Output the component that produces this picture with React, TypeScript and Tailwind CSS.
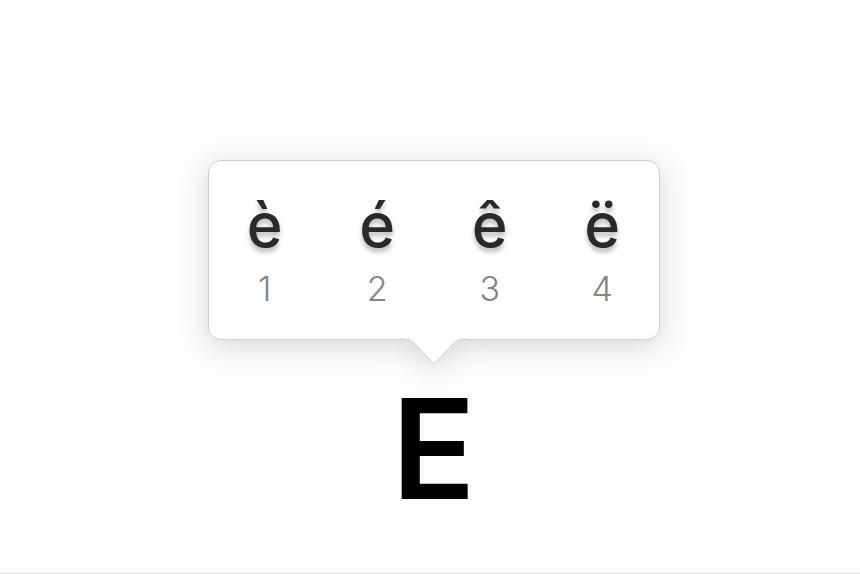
import React from "react";

const accents = [
  { ch: "è", n: "1" },
  { ch: "é", n: "2" },
  { ch: "ê", n: "3" },
  { ch: "ë", n: "4" },
];

export default function App() {
  return (
    <div className="h-[574px] w-full bg-[#fdfdfd] flex flex-col overflow-hidden" style={{ fontFamily: "Inter, 'Liberation Sans', sans-serif" }}>
      <div className="flex-1 flex flex-col items-center pt-[160px] pl-[7px]">
        <div className="relative w-[452px] drop-shadow-[0_6px_14px_rgba(0,0,0,0.15)]">
          <div className="h-[180px] rounded-[13px] border border-[#cfcfcf] bg-white grid grid-cols-4">
            {accents.map((a) => (
              <div key={a.n} className="flex flex-col items-center">
                <div className="mt-[28px] h-[72px] leading-[72px] text-[61px] font-medium text-[#2a2a2a] [text-shadow:0_4px_5px_rgba(0,0,0,0.28)]">
                  {a.ch}
                </div>
                <div className="mt-[8px] leading-[40px] text-[34px] font-light text-[#858585]">{a.n}</div>
              </div>
            ))}
          </div>
          <svg className="absolute left-[192px] top-[178px]" width="68" height="30" viewBox="0 0 68 30">
            <path d="M0 1 C9 1 11 2 15 6 L31 23 Q34 27 37 23 L53 6 C57 2 59 1 68 1 L68 0 L0 0 Z" fill="#ffffff" />
            <path d="M0 1 C9 1 11 2 15 6 L31 23 Q34 27 37 23 L53 6 C57 2 59 1 68 1" fill="none" stroke="#cfcfcf" strokeWidth="1" />
          </svg>
        </div>
        <div className="mt-[39px] text-[139px] leading-[139px] font-semibold text-black">E</div>
      </div>
      <div className="h-px bg-[#e6e6e6]" />
    </div>
  );
}
